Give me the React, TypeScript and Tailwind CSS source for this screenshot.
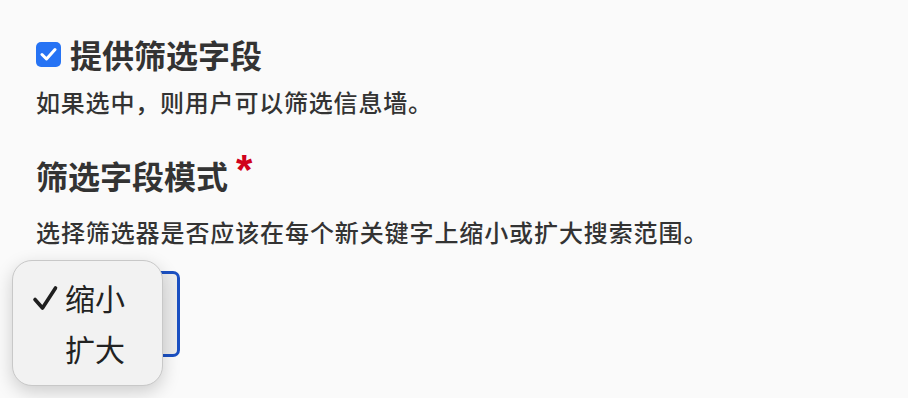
import { useState } from "react";

const font = { fontFamily: '"Noto Sans CJK SC", "Noto Sans", sans-serif' };

const CheckMark = () => (
    <svg width="26" height="26" viewBox="0 0 26 26" fill="none">
        <path d="M3 14.5 L10.5 23 L23.5 3" stroke="#1f1f1f" strokeWidth="3.6" strokeLinecap="round" strokeLinejoin="round" />
    </svg>
);

const App = () => {
    const [mode, setMode] = useState("narrow");

    return (
        <div className="min-h-[398px] w-full bg-[#fafafa] pl-[36px] pt-[34px] text-[#333]" style={font}>
            <label className="flex items-center gap-[9px]">
                <span className="flex h-[25px] w-[25px] items-center justify-center rounded-[5px] bg-[#2673f4]">
                    <svg width="17" height="14" viewBox="0 0 17 14" fill="none">
                        <path d="M2 7.5 L6.5 12 L15 2.5" stroke="white" strokeWidth="3" strokeLinecap="round" strokeLinejoin="round" />
                    </svg>
                </span>
                <span className="text-[32px] font-bold leading-[40px]">提供筛选字段</span>
            </label>
            <div className="mt-[12px] text-[24px] font-medium leading-[32px] tracking-[0.8px]">如果选中，则用户可以筛选信息墙。</div>

            <div className="mt-[37px] flex items-start text-[32px] font-bold leading-[40px]">
                <span>筛选字段模式</span>
                <span
                    className="relative top-[-5px] ml-[8px] text-[42px] leading-[40px] text-[#d0021b]"
                    style={{ fontFamily: '"Liberation Sans", sans-serif' }}>
                    *
                </span>
            </div>
            <div className="mt-[21px] text-[24px] font-medium leading-[32px] tracking-[0.9px]">选择筛选器是否应该在每个新关键字上缩小或扩大搜索范围。</div>

            <div className="relative mt-[23px] h-[86px]">
                <div className="h-[86px] w-[144px] rounded-[7px] border-[3px] border-[#1b50c2] bg-[#ececec]" />
                <div className="absolute left-[-24px] top-[-11px] w-[151px] rounded-[20px] border border-[#c8c8c8] bg-[#f2f2f2] py-[11px] pl-[19px] text-[30px] text-[#222] shadow-[0_6px_18px_rgba(0,0,0,0.18)]">
                    <div className="flex h-[51px] items-center" onClick={() => setMode("narrow")}>
                        <span className="flex w-[33px] items-center">{mode === "narrow" && <CheckMark />}</span>
                        <span>缩小</span>
                    </div>
                    <div className="flex h-[51px] items-center" onClick={() => setMode("expand")}>
                        <span className="flex w-[33px] items-center">{mode === "expand" && <CheckMark />}</span>
                        <span>扩大</span>
                    </div>
                </div>
            </div>
        </div>
    );
};

export default App;
